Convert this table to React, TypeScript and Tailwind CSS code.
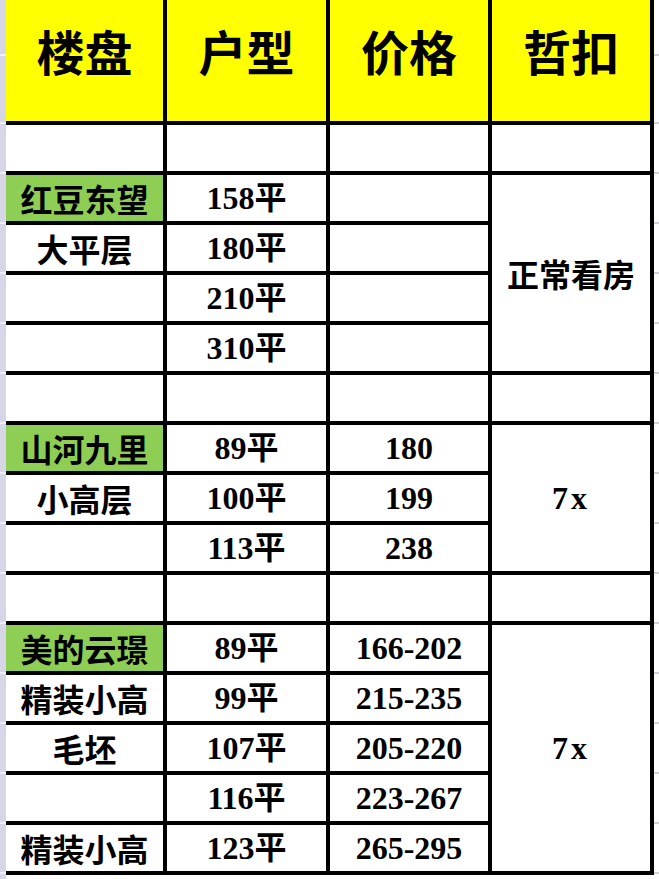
import React from 'react';

type Row = {
  a: string;
  b: string;
  c: string;
  green?: boolean;
  d?: { text: string; span: number };
};

const rows: Row[] = [
  { a: '', b: '', c: '', d: { text: '', span: 1 } },
  { a: '红豆东望', b: '158平', c: '', green: true, d: { text: '正常看房', span: 4 } },
  { a: '大平层', b: '180平', c: '' },
  { a: '', b: '210平', c: '' },
  { a: '', b: '310平', c: '' },
  { a: '', b: '', c: '', d: { text: '', span: 1 } },
  { a: '山河九里', b: '89平', c: '180', green: true, d: { text: '7x', span: 3 } },
  { a: '小高层', b: '100平', c: '199' },
  { a: '', b: '113平', c: '238' },
  { a: '', b: '', c: '', d: { text: '', span: 1 } },
  { a: '美的云璟', b: '89平', c: '166-202', green: true, d: { text: '7x', span: 5 } },
  { a: '精装小高', b: '99平', c: '215-235' },
  { a: '毛坯', b: '107平', c: '205-220' },
  { a: '', b: '116平', c: '223-267' },
  { a: '精装小高', b: '123平', c: '265-295' },
];

const headers = ['楼盘', '户型', '价格', '哲扣'];

const sans = "font-['Noto_Sans_CJK_SC',sans-serif]";
const serif = "font-['Liberation_Serif','Noto_Sans_CJK_SC',serif]";

// gutter ticks like the spreadsheet row lines
function Gutter({ side }: { side: 'left' | 'right' }) {
  const tick = side === 'left' ? 'bg-[#eeeef5]' : 'bg-[#d2d2dd]';
  return (
    <div className={`flex flex-col shrink-0 ${side === 'left' ? 'w-[6px] bg-[#d6d6e6]' : 'w-[5px]'}`}>
      <div className="h-[54px]" />
      <div className={`h-[2px] ${tick}`} />
      <div className="h-[66px]" />
      <div className={`h-[2px] ${tick}`} />
      {rows.map((_, i) => (
        <React.Fragment key={i}>
          <div className="h-[48px]" />
          <div className={`h-[2px] ${tick}`} />
        </React.Fragment>
      ))}
      <div className="flex-1" />
    </div>
  );
}

export default function App() {
  return (
    <div className="w-[659px] h-[879px] bg-white flex overflow-hidden">
      <Gutter side="left" />
      <div className="self-start grid grid-cols-[157px_159px_158px_158px] grid-rows-[121px_repeat(15,46px)] gap-[4px] pr-[4px] pb-[4px] bg-black">
        {headers.map((h) => (
          <div
            key={h}
            className={`bg-[#ffff00] flex items-center justify-center pb-[22px] text-[48px] font-bold text-black ${sans}`}
          >
            {h}
          </div>
        ))}
        {rows.map((r, i) => (
          <React.Fragment key={i}>
            <div
              className={`flex items-center justify-center text-[32px] font-bold text-black leading-none ${sans} ${
                r.green ? 'bg-[#8fce55]' : 'bg-white'
              }`}
            >
              {r.a}
            </div>
            <div className={`bg-white flex items-center justify-center text-[32px] font-bold text-black leading-none ${serif}`}>
              {r.b}
            </div>
            <div className={`bg-white flex items-center justify-center text-[32px] font-bold text-black leading-none ${serif}`}>
              {r.c}
            </div>
            {r.d && (
              <div
                className={`bg-white flex items-center justify-center text-[32px] font-bold text-black leading-none ${
                  r.d.text === '7x' ? `${serif} tracking-[3px]` : sans
                } ${r.d.span === 4 ? 'row-span-4' : r.d.span === 3 ? 'row-span-3' : r.d.span === 5 ? 'row-span-5' : ''}`}
              >
                {r.d.text}
              </div>
            )}
          </React.Fragment>
        ))}
      </div>
      <Gutter side="right" />
    </div>
  );
}
